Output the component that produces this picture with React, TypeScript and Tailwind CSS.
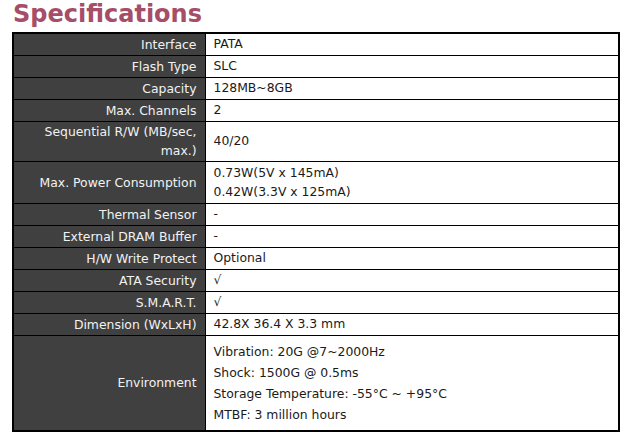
import React from "react";

type Row = { label: React.ReactNode; values: string[]; h: string };

const rows: Row[] = [
  { label: "Interface", values: ["PATA"], h: "h-[22px]" },
  { label: "Flash Type", values: ["SLC"], h: "h-[22px]" },
  { label: "Capacity", values: ["128MB~8GB"], h: "h-[22px]" },
  { label: "Max. Channels", values: ["2"], h: "h-[22px]" },
  {
    label: (
      <>
        Sequential R/W (MB/sec,
        <br />
        max.)
      </>
    ),
    values: ["40/20"],
    h: "h-[40px]",
  },
  {
    label: "Max. Power Consumption",
    values: ["0.73W(5V x 145mA)", "0.42W(3.3V x 125mA)"],
    h: "h-[42px]",
  },
  { label: "Thermal Sensor", values: ["-"], h: "h-[22px]" },
  { label: "External DRAM Buffer", values: ["-"], h: "h-[22px]" },
  { label: "H/W Write Protect", values: ["Optional"], h: "h-[22px]" },
  { label: "ATA Security", values: ["√"], h: "h-[22px]" },
  { label: "S.M.A.R.T.", values: ["√"], h: "h-[22px]" },
  { label: "Dimension (WxLxH)", values: ["42.8X 36.4 X 3.3 mm"], h: "h-[22px]" },
  {
    label: "Environment",
    values: [
      "Vibration: 20G @7~2000Hz",
      "Shock: 1500G @ 0.5ms",
      "Storage Temperature: -55°C ~ +95°C",
      "MTBF: 3 million hours",
    ],
    h: "h-[96px]",
  },
];

export default function App() {
  return (
    <div
      className="w-[633px] h-[439px] bg-white overflow-hidden"
      style={{ fontFamily: '"DejaVu Sans", Verdana, sans-serif' }}
    >
      <h1 className="pl-[13px] h-[32px] text-[24px] leading-[28px] font-bold text-[#a64d68]">
        Specifications
      </h1>
      <table className="ml-[12px] w-[608px] border-collapse border-2 border-black text-[12.4px]">
        <tbody>
          {rows.map((r, i) => (
            <tr key={i} className={r.h}>
              <td className="w-[192px] bg-[#404040] text-[#f2f2f2] text-right align-middle pr-[8px] pl-2 leading-[19px] border border-black">
                {r.label}
              </td>
              <td className="bg-white text-[#1a1a1a] align-middle pl-[8px] border border-black">
                {r.values.map((v, j) => (
                  <div
                    key={j}
                    className={r.values.length === 4 ? "leading-[21px]" : r.values.length === 2 ? "leading-[19px]" : "leading-[16px]"}
                  >
                    {v}
                  </div>
                ))}
              </td>
            </tr>
          ))}
        </tbody>
      </table>
    </div>
  );
}
